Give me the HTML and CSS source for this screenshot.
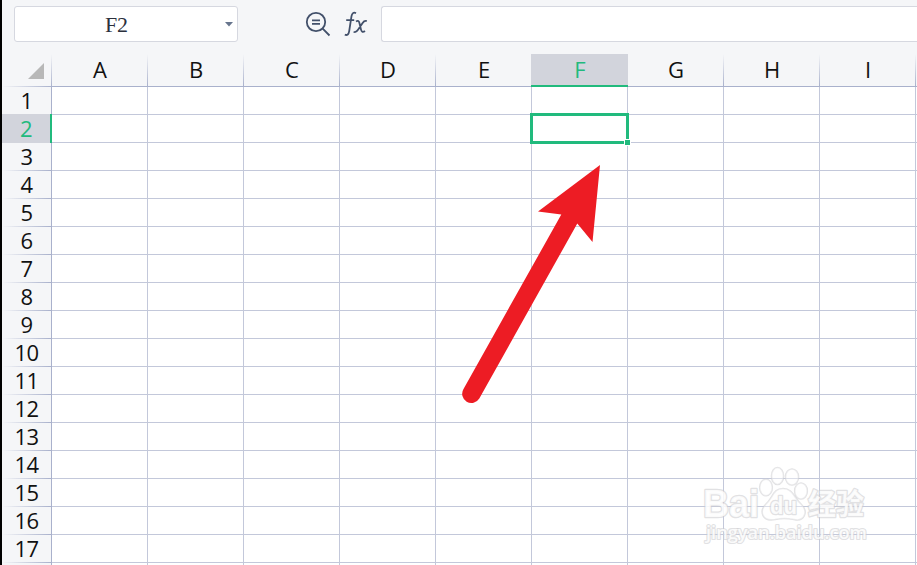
FILE: index.html
```html
<!DOCTYPE html>
<html lang="zh-CN">
<head>
    <meta charset="UTF-8">
    <meta name="viewport" content="width=device-width, initial-scale=1.0">
    <title>Sheet</title>
    <link rel="stylesheet" href="styles.css">
</head>
<body>
    <div class="window">
        <div class="formula-bar">
            <div class="name-box">
                <span class="name-text">F2</span>
                <svg class="caret" width="8" height="5" viewBox="0 0 8 5"><path d="M0 0h8L4 4.5z"/></svg>
            </div>
            <div class="tools">
                <svg class="tool-icon" width="26" height="26" viewBox="0 0 26 26">
                    <circle cx="11" cy="11" r="9.2"/>
                    <path d="M17.7 17.7L24.5 24.5M7 9.3h8M7 12.8h8"/>
                </svg>
                <svg class="tool-icon" width="24" height="26" viewBox="0 0 24 26">
                    <path d="M12 2.2C9.500.8 8 2.4 7.500 5.2L5.200 20.200C4.700 23.300 3.300 24.700.8 23.700M2.200 9.200h8"/>
                    <path d="M12 10.500C14 9.200 15 10 15.500 12.200L17 18.600C17.600 21 18.900 21.600 21 20M22.800 10.200C20.800 9.400 19.800 10.200 18.600 12L14.200 18.600C12.800 20.800 11.500 21.700 9.600 20.800"/>
                </svg>
            </div>
            <div class="formula-input"></div>
        </div>

        <div class="sheet" id="sheet"></div>

        <svg class="arrow" width="150" height="250" viewBox="0 0 150 250">
            <path d="M140 5L132.500 82L117.300 63.500L19.300 238.500A9 9 0 0 1 3.500 229L101.300 54.500L78 51.500Z"/>
        </svg>

        <svg class="watermark" width="180" height="90" viewBox="0 0 180 90">
            <text class="wm-big" x="3" y="56" textLength="56" lengthAdjust="spacingAndGlyphs">Bai</text>
            <ellipse cx="66" cy="26.500" rx="6.300" ry="8.300"/>
            <ellipse cx="77.500" cy="15" rx="6" ry="8.500"/>
            <ellipse cx="92" cy="16" rx="6.500" ry="8"/>
            <ellipse cx="101" cy="30" rx="6.300" ry="8"/>
            <path d="M83 27.500C93 27.500 94 37 101 43C109 51 104 61 94 58.500Q84 56.500 75 58.500C62 61 59 50 66 43C73 37 73 27.500 83 27.500Z"/>
            <text class="wm-du" x="70" y="53" textLength="27" lengthAdjust="spacingAndGlyphs">du</text>
            <text class="wm-cn" x="108" y="54" textLength="56" lengthAdjust="spacingAndGlyphs">经验</text>
            <text class="wm-url" x="6" y="78" textLength="161" lengthAdjust="spacingAndGlyphs">jingyan.baidu.com</text>
        </svg>
    </div>

    <script>
        const columns = ['A', 'B', 'C', 'D', 'E', 'F', 'G', 'H', 'I', ''];
        const activeCol = 'F';
        const activeRow = 2;
        const lastRow = 17;
        const sheet = document.getElementById('sheet');

        // Add one cell to the grid
        function addCell(className, text) {
            const cell = document.createElement('div');
            cell.className = className;
            cell.textContent = text;
            sheet.appendChild(cell);
        }

        addCell('corner', '');
        columns.forEach(function(col) {
            addCell(col === activeCol ? 'col-head active' : 'col-head', col);
        });

        // One extra blank row fills the bottom edge
        for (let row = 1; row <= lastRow + 1; row++) {
            addCell(row === activeRow ? 'row-head active' : 'row-head', row <= lastRow ? row : '');
            columns.forEach(function(col) {
                const selected = row === activeRow && col === activeCol;
                addCell(selected ? 'cell selected' : 'cell', '');
            });
        }
    </script>
</body>
</html>
```
FILE: styles.css
```css
body {
    margin: 0;
    overflow: hidden;
    font-family: 'Open Sans', 'Noto Sans CJK SC', sans-serif;
    color: #111;
}
.window {
    position: relative;
    box-sizing: border-box;
    width: 917px;
    height: 565px;
    overflow: hidden;
    border-left: 2px solid #000;
    background-color: #f5f6f8;
}
.formula-bar {
    display: flex;
    box-sizing: border-box;
    height: 54px;
    padding: 6px 0 12px 12px;
}
.name-box {
    display: flex;
    align-items: center;
    box-sizing: border-box;
    width: 224px;
    padding-right: 4px;
    border: 1px solid #d6d8e0;
    border-radius: 3px;
    background-color: #fff;
}
.name-text {
    flex: 1;
    padding-right: 7px;
    padding-top: 1px;
    text-align: center;
    font-family: 'Liberation Serif', serif;
    font-size: 22px;
    color: #2b303c;
}
.caret {
    fill: #67758d;
}
.tools {
    display: flex;
    gap: 13px;
    width: 77px;
    padding: 5px 0 0 67px;
    margin-right: -1px;
}
.tool-icon {
    flex: none;
    fill: none;
    stroke: #42506a;
    stroke-width: 1.8;
}
.formula-input {
    flex: 1;
    border: 1px solid #d6d8e0;
    border-right: none;
    border-radius: 3px 0 0 3px;
    background-color: #fff;
}
.sheet {
    display: grid;
    grid-template-columns: 50px repeat(10, 96px);
    grid-template-rows: 33px repeat(18, 28px);
    width: 1010px;
}
.corner,
.col-head,
.row-head,
.cell {
    box-sizing: border-box;
}
.corner {
    padding: 9px 8px 0 0;
    background:
        linear-gradient(#f5f6f8, #a9b1cc) right / 1px 100% no-repeat,
        linear-gradient(90deg, #f5f6f8, #a9b1cc) bottom / 100% 1px no-repeat;
}
.corner::before {
    content: '';
    display: block;
    width: 16px;
    height: 16px;
    margin-left: auto;
    background-color: #b8b8b8;
    clip-path: polygon(100% 0, 100% 100%, 0 100%);
}
.col-head {
    line-height: 31px;
    text-align: center;
    font-size: 22px;
    border-bottom: 1px solid #a9b1cc;
    background: linear-gradient(#f5f6f8, #a9b1cc) right / 1px 100% no-repeat;
}
.col-head.active {
    margin-left: -1px;
    padding-left: 1px;
    color: #21ba7d;
    background: #d2d4dc;
    border-bottom: 2px solid #21ba7d;
}
.row-head {
    line-height: 27px;
    text-align: center;
    font-size: 22px;
    letter-spacing: -0.7px;
    border-right: 1px solid #a9b1cc;
    background: linear-gradient(90deg, #f5f6f8, #a9b1cc) bottom / 100% 1px no-repeat;
}
.row-head.active {
    margin-top: -1px;
    padding-top: 1px;
    color: #21ba7d;
    background: #d2d4dc;
    border-right: 2px solid #21ba7d;
}
.cell {
    border-right: 1px solid #c3c8da;
    border-bottom: 1px solid #c3c8da;
    background-color: #fff;
}
.cell.selected {
    position: relative;
    z-index: 1;
    margin: -2px -1px -1px -2px;
    border: 3px solid #21ba7d;
}
/* fill handle */
.cell.selected::after {
    content: '';
    position: absolute;
    right: -4px;
    bottom: -4px;
    width: 5px;
    height: 5px;
    background-color: #21ba7d;
    box-shadow: 0 0 0 1px #fff;
}
.arrow {
    position: absolute;
    left: 458px;
    top: 160px;
    z-index: 2;
    fill: #ed1c24;
}
.watermark {
    position: absolute;
    left: 698px;
    top: 461px;
    fill: rgba(255, 255, 255, 0.85);
    stroke: rgba(205, 205, 208, 0.6);
    stroke-width: 2.6;
    stroke-linejoin: round;
    paint-order: stroke;
    font-weight: bold;
}
.watermark ellipse,
.watermark path {
    fill: rgba(255, 255, 255, 0.4);
    stroke-width: 1.6;
}
.wm-big {
    font-family: 'Liberation Sans', sans-serif;
    font-size: 38px;
}
.wm-du {
    font-family: 'Liberation Sans', sans-serif;
    font-size: 24px;
}
.wm-cn {
    font-family: 'Noto Sans CJK SC', sans-serif;
    font-size: 29px;
}
.wm-url {
    font-family: 'Open Sans', sans-serif;
    font-size: 18px;
    font-weight: 600;
    stroke-width: 2.2;
}
```
